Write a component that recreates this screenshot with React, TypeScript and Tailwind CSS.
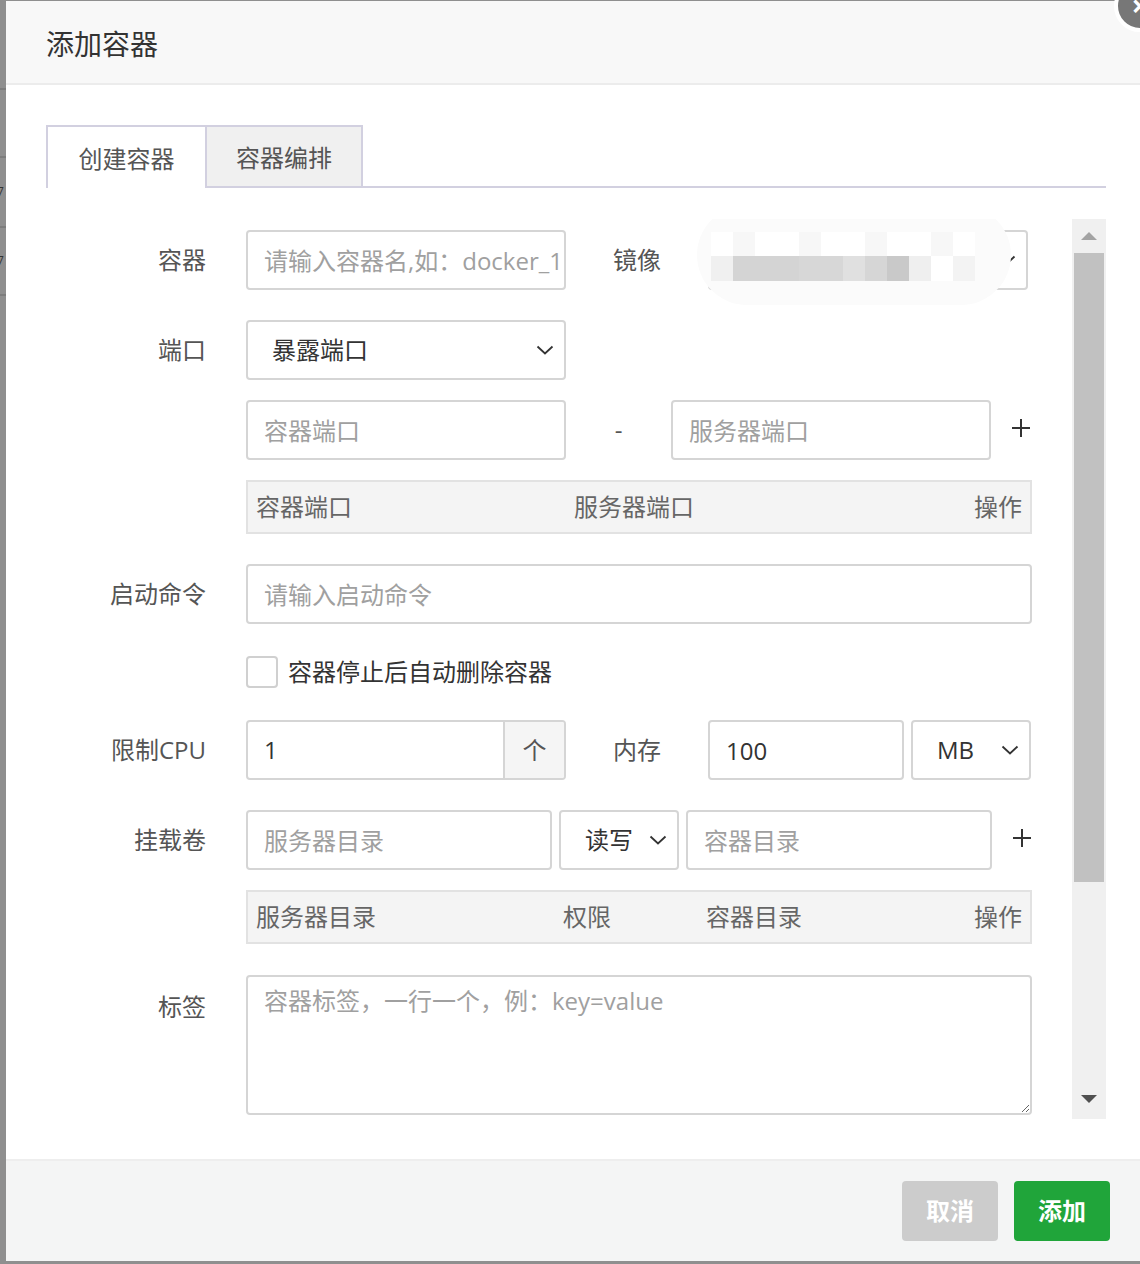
import type { ReactNode } from "react";

const font = "font-['Open_Sans','Noto_Sans_CJK_SC',sans-serif]";

function Chevron() {
  return (
    <svg width="18" height="10" viewBox="0 0 18 10" fill="none" className="shrink-0">
      <path d="M1.5 1.5 L9 8.5 L16.5 1.5" stroke="#333" strokeWidth="1.8" />
    </svg>
  );
}

function Plus() {
  return (
    <svg width="20" height="20" viewBox="0 0 20 20" className="ml-[20px] -mt-[4px] shrink-0">
      <path d="M10 1 V19 M1 10 H19" stroke="#333" strokeWidth="2" />
    </svg>
  );
}

function Input({ placeholder, value, className = "" }: { placeholder?: string; value?: string; className?: string }) {
  return (
    <input
      readOnly
      placeholder={placeholder}
      defaultValue={value}
      className={`h-[60px] border-2 border-[#d5d5d5] rounded-[4px] pl-[16px] pr-[2px] text-[24px] text-[#333] placeholder:text-[#a0a0a0] outline-none bg-white ${font} ${className}`}
    />
  );
}

function Select({ text, className = "" }: { text: string; className?: string }) {
  return (
    <div
      className={`h-[60px] border-2 border-[#d5d5d5] rounded-[4px] flex items-center justify-between pl-[24px] pr-[10px] text-[24px] text-[#333] bg-white ${className}`}
    >
      <span>{text}</span>
      <Chevron />
    </div>
  );
}

function Row({ label, children, top = "mt-[30px]", alignTop = false }: { label?: string; children: ReactNode; top?: string; alignTop?: boolean }) {
  return (
    <div className={`flex ${alignTop ? "items-start" : "items-center"} ${top}`}>
      <div className={`w-[160px] shrink-0 text-right text-[24px] text-[#555] ${alignTop ? "pt-[14px]" : ""}`}>{label}</div>
      <div className="ml-[40px] flex items-center">{children}</div>
    </div>
  );
}

const blurBlocks = ["#f0f0f0", "#d4d4d4", "#d4d4d4", "#d4d4d4", "#d7d7d7", "#d7d7d7", "#e0e0e0", "#d6d6d6", "#c9c9c9", "#efefef", "#ffffff", "#f3f3f3"];

export default function App() {
  return (
    <div className={`w-[1140px] h-[1264px] bg-[#8f8f8f] flex overflow-hidden relative ${font}`}>
      {/* page behind the overlay */}
      <div className="w-[6px] shrink-0 flex flex-col">
        <div className="h-[90px] border-b-2 border-[#7d7d7d]" />
        <div className="h-[68px] border-b-2 border-[#7d7d7d]" />
        <div className="h-[70px] border-b-2 border-[#7d7d7d] flex items-center text-[12px] text-[#333] leading-none -ml-[3px]">7</div>
        <div className="h-[68px] border-b-2 border-[#7d7d7d] flex items-center text-[12px] text-[#333] leading-none -ml-[3px]">7</div>
      </div>

      {/* dialog */}
      <div className="w-[1140px] shrink-0 mt-[1px] h-[1260px] bg-white flex flex-col">
        <div className="h-[84px] shrink-0 bg-[#f8f8f8] border-b-2 border-[#ececec] flex items-center pl-[40px] pt-[4px] text-[28px] text-[#333]">
          添加容器
        </div>

        <div className="flex-1 px-[40px] pt-[40px] flex flex-col">
          {/* tabs */}
          <div className="flex items-end w-[1060px]">
            <div className="h-[63px] w-[159px] border-l-2 border-t-2 border-[#d2d0e0] bg-white flex items-center justify-center pt-[3px] text-[24px] text-[#555]">
              创建容器
            </div>
            <div className="h-[63px] w-[158px] border-l-2 border-t-2 border-r-2 border-b-2 border-[#d2d0e0] bg-[#f0f0f0] flex items-center justify-center pt-[3px] text-[24px] text-[#555]">
              容器编排
            </div>
            <div className="flex-1 border-b-2 border-[#d2d0e0]" />
          </div>

          <div className="mt-[31px] h-[900px] w-[1060px] flex">
            {/* form */}
            <div className="w-[1026px] h-[900px] overflow-hidden pt-[11px]">
              <Row label="容器" top="mt-0">
                <Input placeholder="请输入容器名,如：docker_1" className="w-[320px]" />
                <div className="w-[142px] text-center text-[24px] text-[#555]">镜像</div>
                <div className="relative">
                  <Select text="" className="w-[320px]" />
                  <div className="absolute left-[-11px] top-[-25px] w-[314px] h-[100px] rounded-[50px] bg-[#fbfbfb]" />
                  <div className="absolute left-[3px] top-[2px] flex flex-col">
                    <div className="flex h-[24px]">
                      {blurBlocks.map((c, i) => (
                        <div key={i} className={`w-[22px] ${i % 3 === 1 ? "bg-[#f7f7f7]" : "bg-white"}`} />
                      ))}
                    </div>
                    <div className="flex h-[25px]">
                      {blurBlocks.map((c, i) => (
                        <div key={i} className="w-[22px]" style={{ background: c }} />
                      ))}
                    </div>
                  </div>
                </div>
              </Row>

              <Row label="端口">
                <Select text="暴露端口" className="w-[320px]" />
              </Row>

              <Row top="mt-[20px]">
                <Input placeholder="容器端口" className="w-[320px]" />
                <div className="w-[105px] text-center text-[24px] text-[#555]">-</div>
                <Input placeholder="服务器端口" className="w-[320px]" />
                <Plus />
              </Row>

              <Row top="mt-[20px]">
                <div className="w-[786px] h-[54px] border-2 border-[#e2e2e2] bg-[#f4f4f4] grid grid-cols-[326px_1fr_auto] items-center text-[24px] text-[#666]">
                  <div className="pl-[8px]">容器端口</div>
                  <div>服务器端口</div>
                  <div className="pr-[8px]">操作</div>
                </div>
              </Row>

              <Row label="启动命令">
                <Input placeholder="请输入启动命令" className="w-[786px]" />
              </Row>

              <div className="flex items-center mt-[32px] h-[32px] pl-[200px]">
                <div className="w-[32px] h-[32px] border-2 border-[#d0d0d0] rounded-[4px] bg-white" />
                <span className="ml-[10px] text-[24px] leading-[32px] text-[#333]">容器停止后自动删除容器</span>
              </div>

              <Row label="限制CPU" top="mt-[32px]">
                <div className="w-[320px] h-[60px] border-2 border-[#d5d5d5] rounded-[4px] flex overflow-hidden">
                  <div className="flex-1 flex items-center pl-[16px] text-[24px] text-[#333]">1</div>
                  <div className="w-[61px] border-l-2 border-[#d5d5d5] bg-[#f5f5f5] flex items-center justify-center text-[24px] text-[#555]">个</div>
                </div>
                <div className="w-[142px] text-center text-[24px] text-[#555]">内存</div>
                <Input value="100" className="w-[196px]" />
                <Select text="MB" className="w-[120px] ml-[7px]" />
              </Row>

              <Row label="挂载卷">
                <Input placeholder="服务器目录" className="w-[306px]" />
                <Select text="读写" className="w-[120px] ml-[7px]" />
                <Input placeholder="容器目录" className="w-[306px] ml-[7px]" />
                <Plus />
              </Row>

              <Row top="mt-[20px]">
                <div className="w-[786px] h-[54px] border-2 border-[#e2e2e2] bg-[#f4f4f4] grid grid-cols-[315px_143px_1fr_auto] items-center text-[24px] text-[#666]">
                  <div className="pl-[8px]">服务器目录</div>
                  <div>权限</div>
                  <div>容器目录</div>
                  <div className="pr-[8px]">操作</div>
                </div>
              </Row>

              <Row label="标签" top="mt-[31px]" alignTop>
                <textarea
                  readOnly
                  placeholder="容器标签，一行一个，例：key=value"
                  className={`w-[786px] h-[140px] border-2 border-[#d5d5d5] rounded-[4px] px-[16px] py-[6px] text-[24px] text-[#333] placeholder:text-[#a0a0a0] outline-none ${font}`}
                />
              </Row>
            </div>

            {/* scrollbar */}
            <div className="w-[34px] h-[900px] bg-[#f0f0f0] flex flex-col items-center">
              <div className="h-[34px] flex items-center justify-center">
                <div className="w-0 h-0 border-l-[8px] border-r-[8px] border-b-[8px] border-l-transparent border-r-transparent border-b-[#a3a3a3]" />
              </div>
              <div className="w-[30px] h-[629px] bg-[#c1c1c1]" />
              <div className="flex-1" />
              <div className="h-[40px] flex items-center justify-center">
                <div className="w-0 h-0 border-l-[8px] border-r-[8px] border-t-[8px] border-l-transparent border-r-transparent border-t-[#505050]" />
              </div>
            </div>
          </div>
        </div>

        {/* footer */}
        <div className="h-[102px] shrink-0 bg-[#f4f5f5] border-t-2 border-[#eeeeee] flex items-center justify-end gap-[16px] pr-[36px]">
          <button className="w-[96px] h-[60px] rounded-[4px] bg-[#cccccc] text-white text-[24px] font-bold">取消</button>
          <button className="w-[96px] h-[60px] rounded-[4px] bg-[#20a53a] text-white text-[24px] font-bold">添加</button>
        </div>
      </div>

      {/* close button */}
      <div className="absolute left-[1114px] top-[-20px] w-[52px] h-[52px] rounded-full bg-[#777] border-[4px] border-white flex items-center justify-center text-white text-[30px] font-bold leading-none">
        ×
      </div>
    </div>
  );
}
